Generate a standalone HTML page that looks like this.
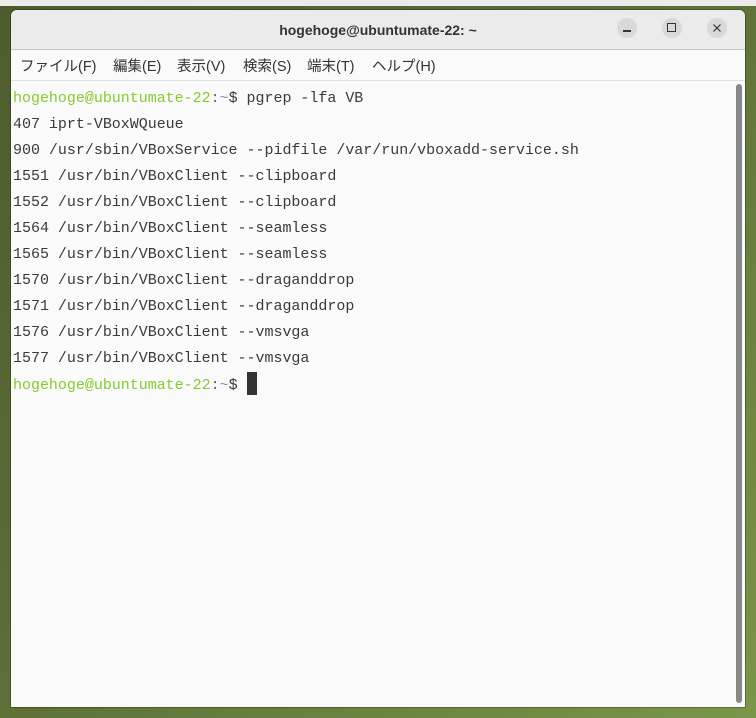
<!DOCTYPE html>
<html><head><meta charset="utf-8"><style>
html,body{margin:0;padding:0;width:756px;height:718px;overflow:hidden}
body{background:linear-gradient(135deg,#4c5c2e 0%,#5b6e36 45%,#7a9648 100%);position:relative;font-family:"Liberation Sans","Noto Sans CJK JP",sans-serif}
.top{position:absolute;left:0;top:0;width:756px;height:6px;background:#ebebeb}
.win{position:absolute;left:11px;top:10px;width:734px;height:697px;background:#fafafa;border-radius:6px 6px 0 0;overflow:hidden;box-shadow:0 0 0 1px rgba(0,0,0,.25)}
.title{height:39px;background:#ebebeb;border-bottom:1px solid #c8c8c8;text-align:center;line-height:40px;font-size:14px;font-weight:bold;color:#333}
.btn{position:absolute;top:8px;width:20px;height:20px;border-radius:50%;background:#d9d9d9}
.menu{height:30px;border-bottom:1px solid #e0e0e0;font-size:14.5px;color:#333;line-height:35px;position:relative}
.menu span{position:absolute;top:0}
.term{position:absolute;left:2px;top:76px;font-family:"Liberation Mono",monospace;font-size:15px;line-height:26px;color:#3a3a3a;white-space:pre;letter-spacing:-0.02px}
.g{color:#84cc2c}.b{color:#7a97b0}.c{color:#666}
.cur{display:inline-block;width:10px;height:23px;background:#333;vertical-align:-6px}
.sb{position:absolute;left:725px;top:74px;width:6px;height:619px;background:#888;border-radius:3px}
</style></head><body>
<div class="top"></div>
<div class="win">
<div class="title">hogehoge@ubuntumate-22: ~</div>
<div class="btn" style="left:606px"><div style="position:absolute;left:6px;top:12px;width:8px;height:1.5px;background:#333"></div></div>
<div class="btn" style="left:651px"><div style="position:absolute;left:5px;top:5px;width:7px;height:7px;border:1.2px solid #333"></div></div>
<div class="btn" style="left:696px"><svg width="20" height="20" style="position:absolute;left:0;top:0"><path d="M6.5 6.5L13.5 13.5M13.5 6.5L6.5 13.5" stroke="#333" stroke-width="1.2"/></svg></div>
<div class="menu"><span style="left:9px">ファイル(F)</span><span style="left:102px">編集(E)</span><span style="left:166px">表示(V)</span><span style="left:232px">検索(S)</span><span style="left:296px">端末(T)</span><span style="left:361px">ヘルプ(H)</span></div>
<div class="term"><span class="g">hogehoge@ubuntumate-22</span><span class="c">:</span><span class="b">~</span>$ pgrep -lfa VB
407 iprt-VBoxWQueue
900 /usr/sbin/VBoxService --pidfile /var/run/vboxadd-service.sh
1551 /usr/bin/VBoxClient --clipboard
1552 /usr/bin/VBoxClient --clipboard
1564 /usr/bin/VBoxClient --seamless
1565 /usr/bin/VBoxClient --seamless
1570 /usr/bin/VBoxClient --draganddrop
1571 /usr/bin/VBoxClient --draganddrop
1576 /usr/bin/VBoxClient --vmsvga
1577 /usr/bin/VBoxClient --vmsvga
<span class="g">hogehoge@ubuntumate-22</span><span class="c">:</span><span class="b">~</span>$ <span class="cur"></span></div>
<div class="sb"></div>
</div>
</body></html>
